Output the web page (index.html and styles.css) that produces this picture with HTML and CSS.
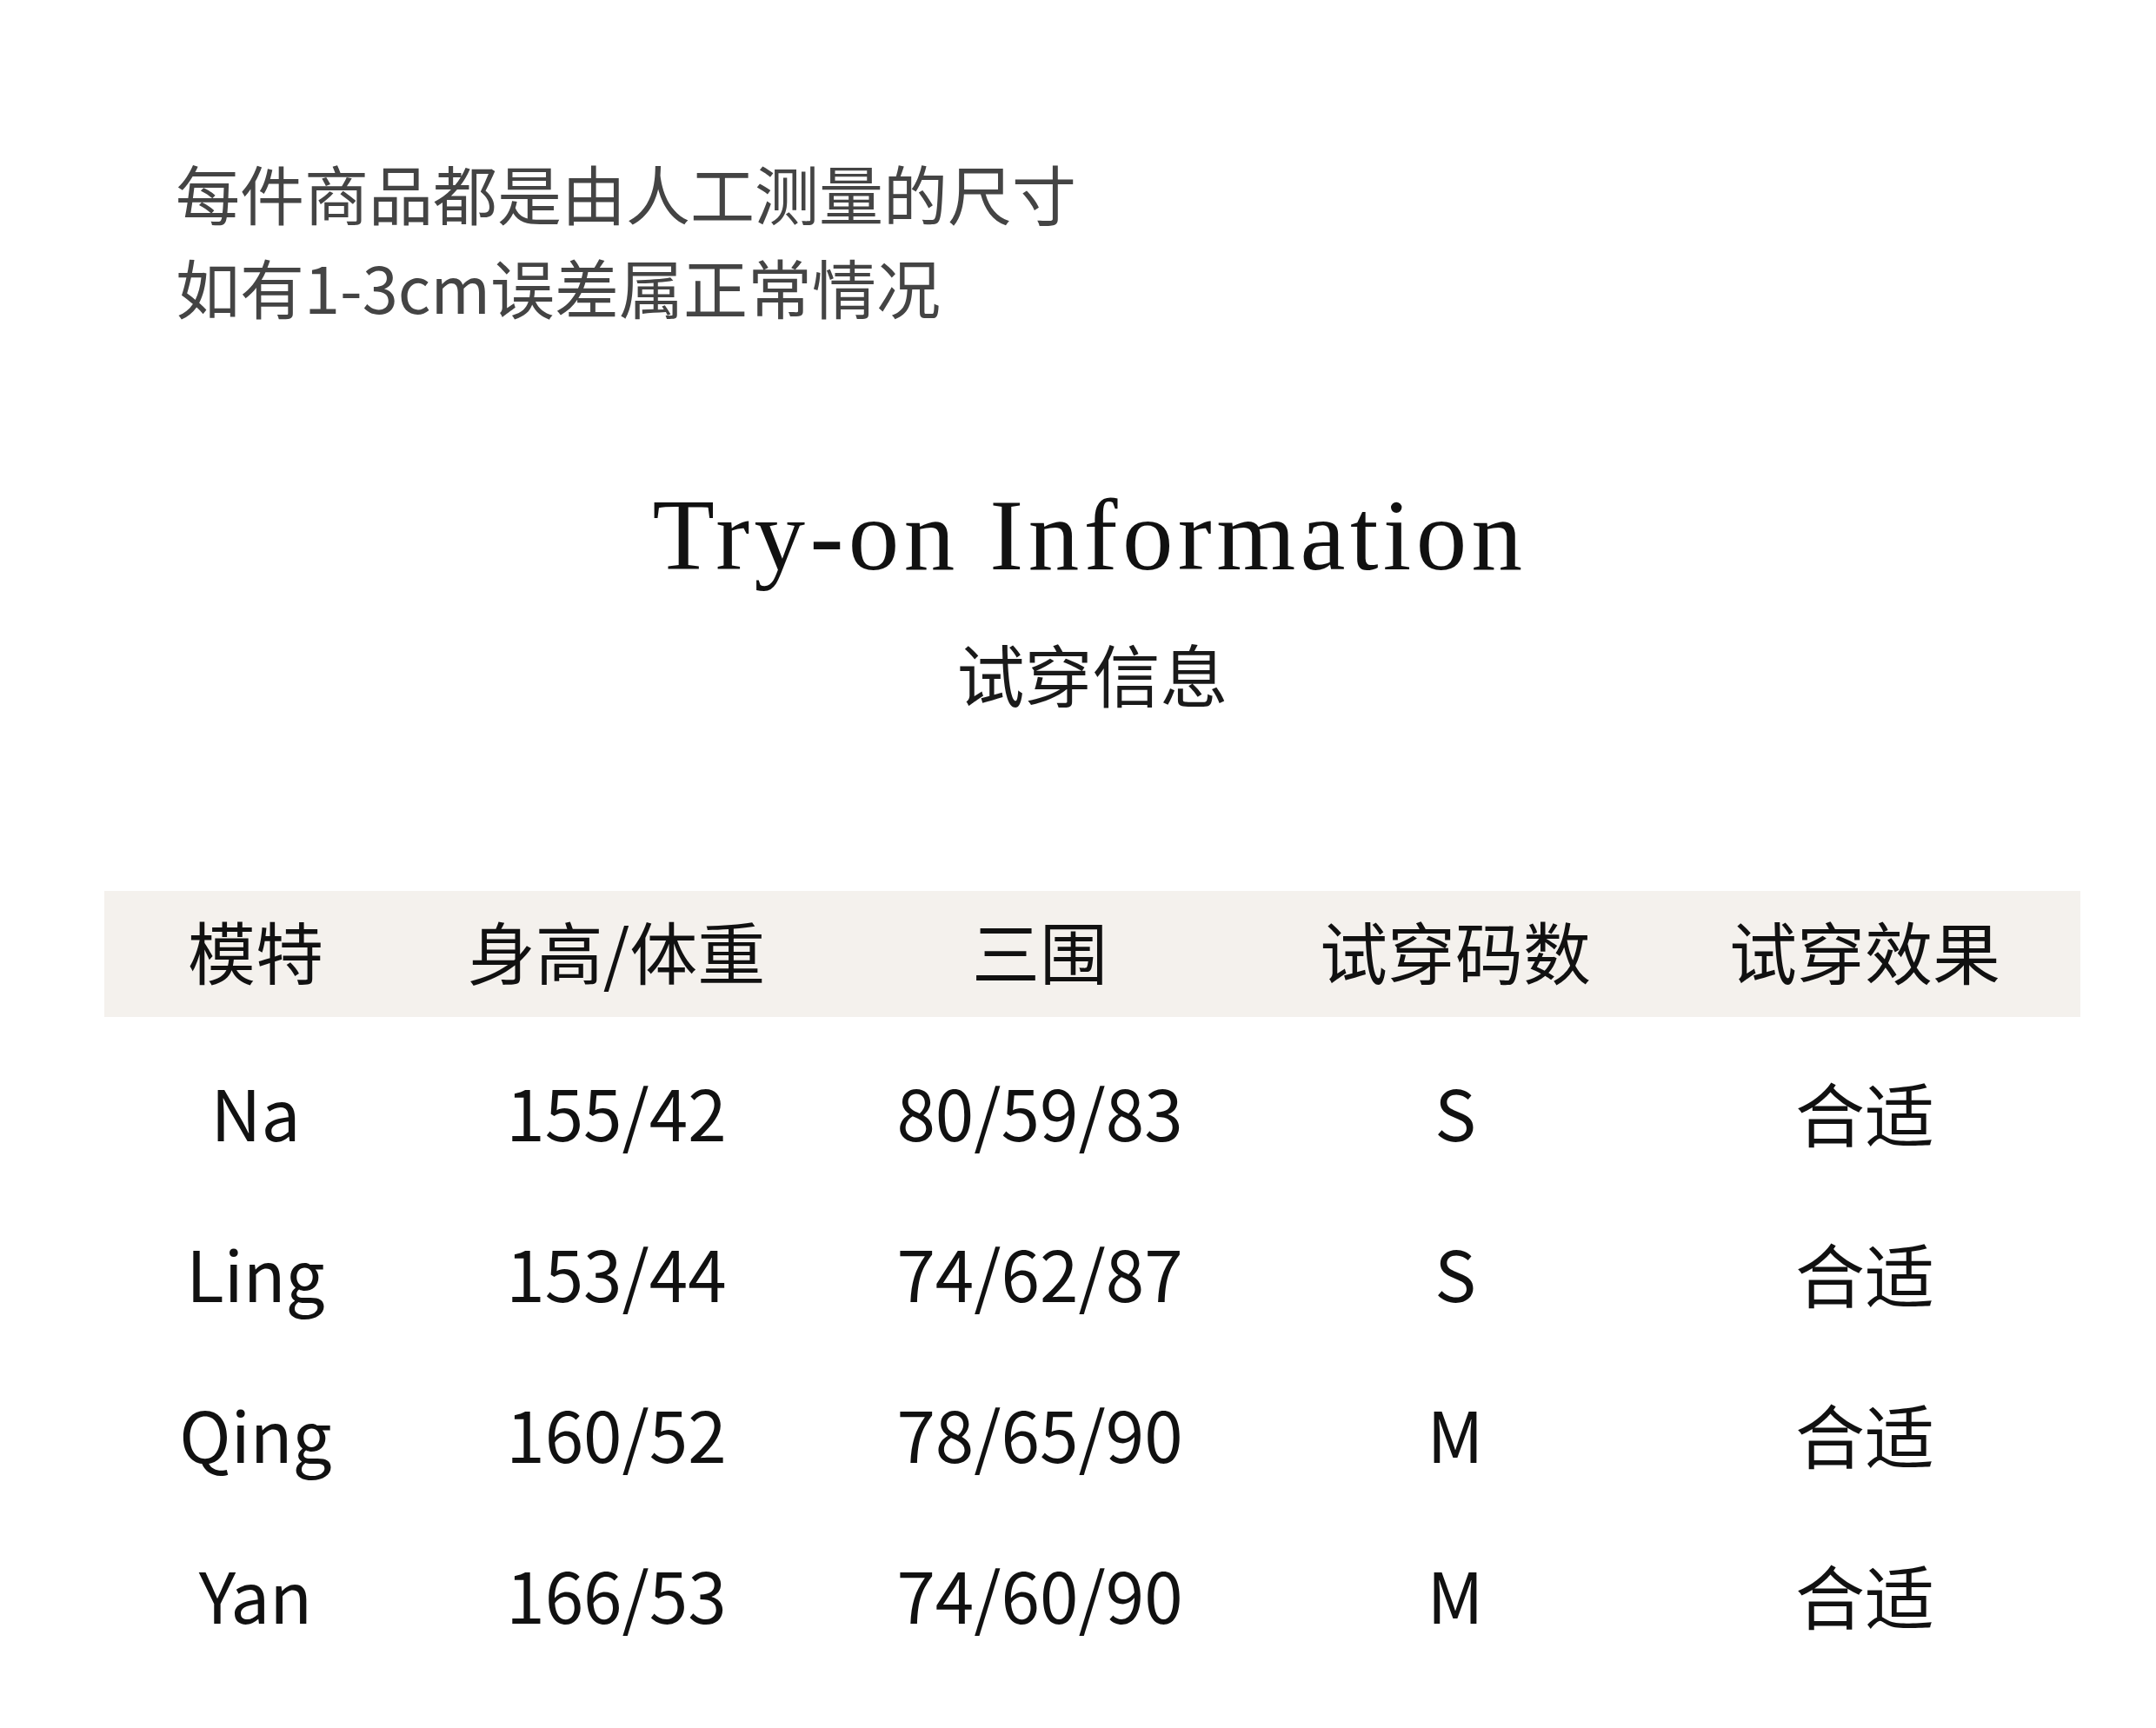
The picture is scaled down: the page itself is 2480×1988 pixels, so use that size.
FILE: index.html
```html
<!DOCTYPE html>
<html lang="zh-CN">
<head>
<meta charset="utf-8">
<title>Try-on Information</title>
<link rel="stylesheet" href="styles.css">
</head>
<body>
  <div class="intro">
    <p class="intro-line">每件商品都是由人工测量的尺寸</p>
    <p class="intro-line">如有1-3cm误差属正常情况</p>
  </div>
  <main class="main">
    <h1 class="title">Try-on Information</h1>
    <h2 class="subtitle">试穿信息</h2>
    <div class="table">
      <div class="row head">
        <div class="cell">模特</div>
        <div class="cell">身高/体重</div>
        <div class="cell">三围</div>
        <div class="cell">试穿码数</div>
        <div class="cell">试穿效果</div>
      </div>
      <div class="body">
        <div class="row">
          <div class="cell">Na</div>
          <div class="cell">155/42</div>
          <div class="cell">80/59/83</div>
          <div class="cell">S</div>
          <div class="cell">合适</div>
        </div>
        <div class="row">
          <div class="cell">Ling</div>
          <div class="cell">153/44</div>
          <div class="cell">74/62/87</div>
          <div class="cell">S</div>
          <div class="cell">合适</div>
        </div>
        <div class="row">
          <div class="cell">Qing</div>
          <div class="cell">160/52</div>
          <div class="cell">78/65/90</div>
          <div class="cell">M</div>
          <div class="cell">合适</div>
        </div>
        <div class="row">
          <div class="cell">Yan</div>
          <div class="cell">166/53</div>
          <div class="cell">74/60/90</div>
          <div class="cell">M</div>
          <div class="cell">合适</div>
        </div>
      </div>
    </div>
  </main>
</body>
</html>
```

FILE: styles.css
```css
* { box-sizing: border-box; }
html, body {
  margin: 0;
  padding: 0;
  background: #ffffff;
}
body {
  width: 2480px;
  min-height: 1988px;
  font-family: "Noto Sans CJK SC", "Noto Sans", sans-serif;
  color: #111111;
}
.intro {
  padding: 167px 0 0 202px;
}
.intro-line {
  margin: 0;
  font-size: 74px;
  line-height: 108px;
  color: #444444;
}
.main {
  margin-left: 120px;
  width: 2273px;
}
.title {
  margin: 163px 0 0 0;
  padding-right: 6px;
  font-family: "Liberation Serif", "Times New Roman", serif;
  font-weight: 400;
  font-size: 117px;
  line-height: 139px;
  letter-spacing: 5.4px;
  text-align: center;
  color: #111111;
}
.subtitle {
  margin: 39px 0 0 0;
  font-weight: 400;
  font-size: 78px;
  line-height: 100px;
  text-align: center;
  color: #1a1a1a;
}
.table {
  margin-top: 201px;
}
.row {
  display: grid;
  grid-template-columns: 348px 482px 492px 464px 478px;
}
.cell {
  text-align: center;
  white-space: nowrap;
}
.head {
  background: #f4f1ed;
  height: 145px;
  font-size: 78px;
  line-height: 137px;
  padding-bottom: 8px;
  color: #111111;
}
.body {
  padding-top: 16px;
}
.body .row {
  height: 185px;
  font-size: 80px;
  line-height: 185px;
  color: #111111;
}
```
